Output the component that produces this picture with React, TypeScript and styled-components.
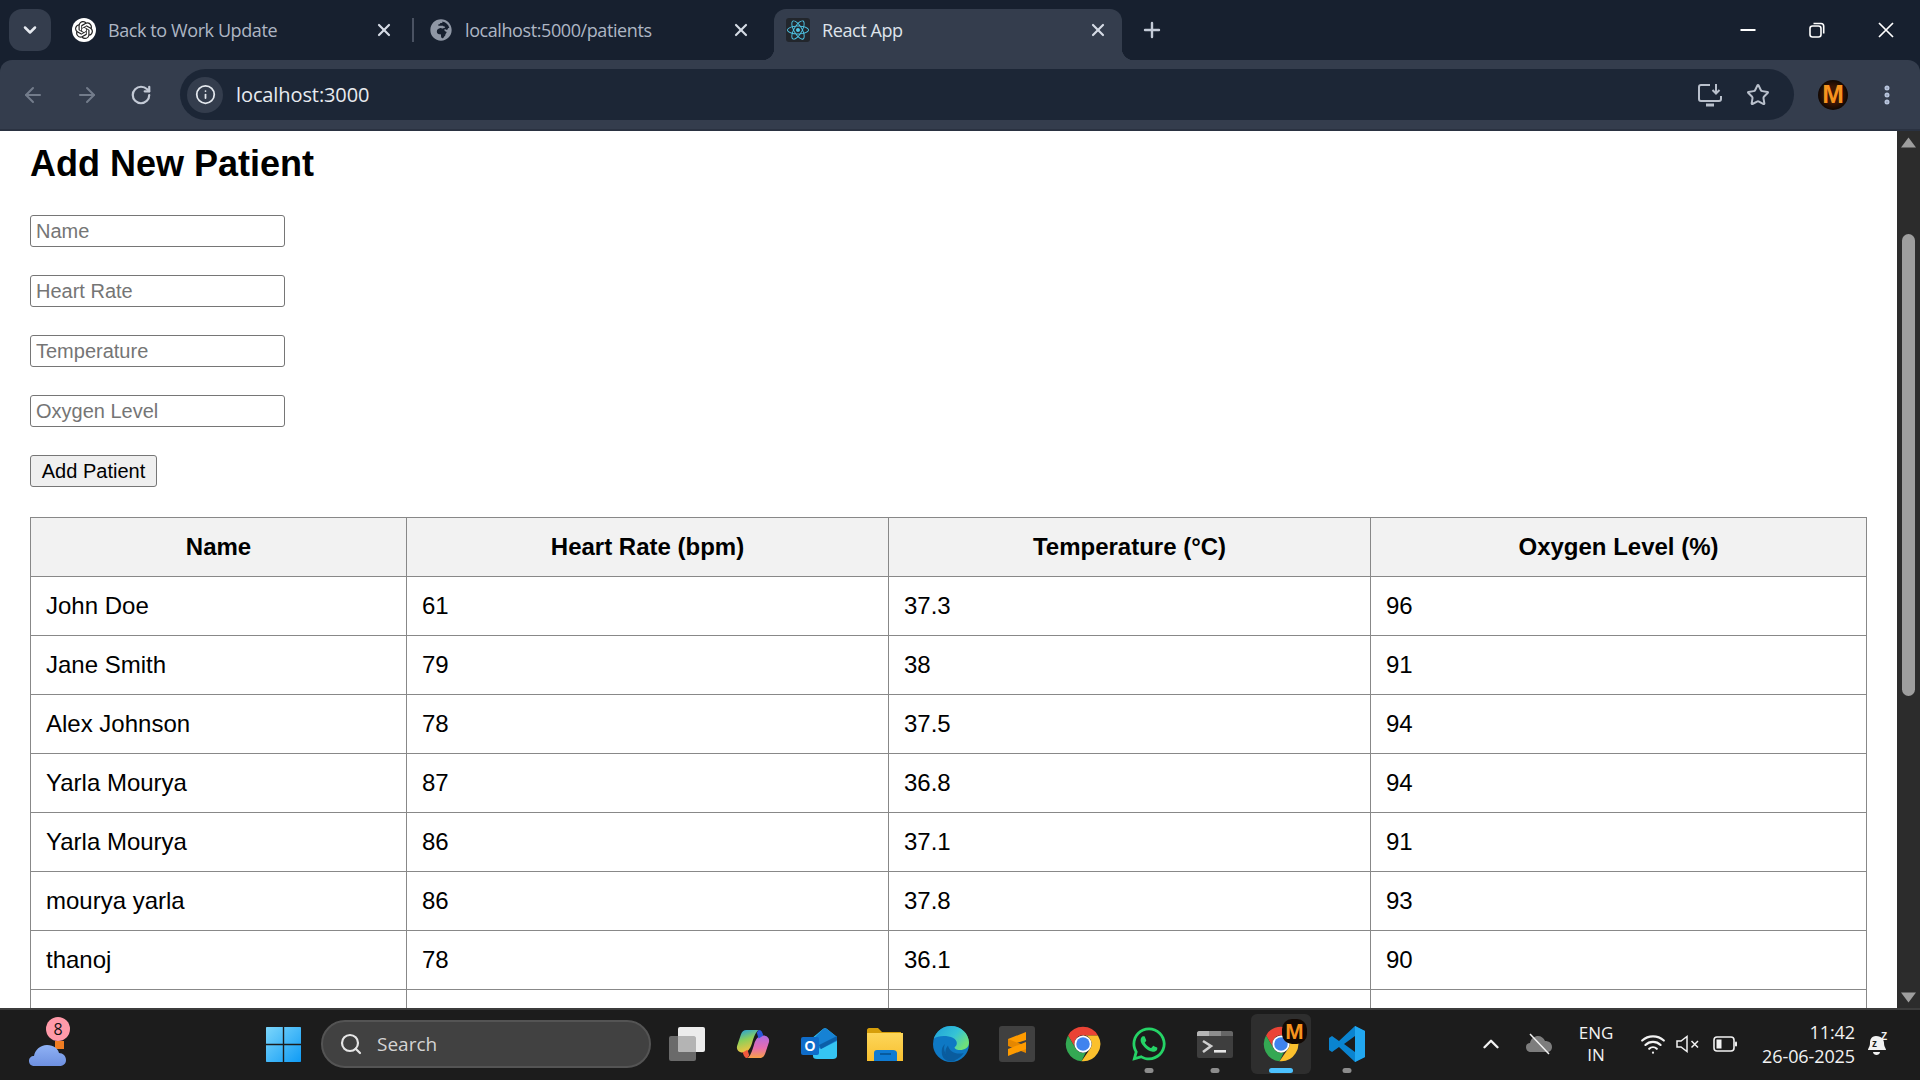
import React from "react";
import styled, { createGlobalStyle } from "styled-components";
import {
  ArrowLeft,
  ArrowRight,
  ChevronDown,
  ChevronUp,
  EllipsisVertical,
  Info,
  Plus,
  RotateCw,
  Search,
  Star,
  Wifi,
  X,
} from "lucide-react";
import { SiOpenai } from "react-icons/si";
import { FaGlobeAfrica, FaReact, FaWhatsapp } from "react-icons/fa";

const GlobalStyle = createGlobalStyle`
  html, body {
    margin: 0;
    height: 100%;
    overflow: hidden;
    background: #fff;
  }
  * {
    box-sizing: border-box;
  }
`;

const Screen = styled.div`
  width: 1920px;
  height: 1080px;
  display: flex;
  flex-direction: column;
  overflow: hidden;
  background: #17202f;
`;

/* browser chrome */

const TabStrip = styled.div`
  height: 60px;
  flex: none;
  display: flex;
  align-items: flex-end;
  padding-left: 9px;
  background: #17202f;
`;

const TabListButton = styled.div`
  width: 42px;
  height: 42px;
  margin: 0 9px 9px 0;
  display: flex;
  align-items: center;
  justify-content: center;
  border-radius: 13px;
  background: #343d4d;
  color: #e6eaf0;
`;

const Tab = styled.div<{ $active?: boolean }>`
  position: relative;
  width: 348px;
  height: 51px;
  display: flex;
  align-items: center;
  gap: 12px;
  padding: 0 14px 9px 12px;
  border-radius: 12px 12px 0 0;
  background: ${(p) => (p.$active ? "#343d4d" : "transparent")};
  color: ${(p) => (p.$active ? "#dfe4ec" : "#aeb6c4")};

  ${(p) =>
    p.$active &&
    `
    &::before, &::after {
      content: "";
      position: absolute;
      bottom: 0;
      width: 12px;
      height: 12px;
    }
    &::before {
      left: -12px;
      background: radial-gradient(circle at 0 0, transparent 12px, #343d4d 12.5px);
    }
    &::after {
      right: -12px;
      background: radial-gradient(circle at 100% 0, transparent 12px, #343d4d 12.5px);
    }
  `}
`;

const TabTitle = styled.span`
  flex: 1;
  font-family: "Open Sans", "Noto Sans", sans-serif;
  font-size: 18px;
  letter-spacing: -0.41px;
  white-space: nowrap;
`;

const TabClose = styled(X)`
  width: 20px;
  height: 20px;
  stroke-width: 2.6;
  color: #d5dbe5;
  flex: none;
`;

const OpenAiBadge = styled.span`
  width: 24px;
  height: 24px;
  flex: none;
  display: flex;
  align-items: center;
  justify-content: center;
  border-radius: 50%;
  background: #fff;
  color: #222;
`;

const ReactBadge = styled.span`
  width: 24px;
  height: 24px;
  flex: none;
  display: flex;
  align-items: center;
  justify-content: center;
  border-radius: 3px;
  background: #22262c;
  color: #4fc6e6;
`;

const GlobeBadge = styled.span`
  width: 24px;
  height: 24px;
  flex: none;
  display: flex;
  align-items: center;
  justify-content: center;
  color: #8f97a5;
`;

const TabDivider = styled.div<{ $hidden?: boolean }>`
  width: 9px;
  height: 24px;
  margin-bottom: 18px;
  flex: none;
  display: flex;
  justify-content: center;

  &::before {
    content: "";
    width: 2px;
    background: ${(p) => (p.$hidden ? "transparent" : "#4a5262")};
  }
`;

const NewTab = styled.div`
  width: 42px;
  height: 42px;
  margin: 0 0 9px 9px;
  display: flex;
  align-items: center;
  justify-content: center;
  color: #c4cbd8;
`;

const WindowControls = styled.div`
  margin-left: auto;
  height: 60px;
  display: flex;
`;

const WindowButton = styled.div`
  width: 69px;
  display: flex;
  align-items: center;
  justify-content: center;
  color: #fff;
`;

const Toolbar = styled.div`
  height: 71px;
  flex: none;
  display: flex;
  align-items: center;
  padding: 0 6px;
  border-bottom: 2px solid #2a3241;
  border-radius: 12px 12px 0 0;
  background: #343d4d;
`;

const NavButton = styled.div<{ $dim?: boolean }>`
  width: 54px;
  height: 48px;
  flex: none;
  display: flex;
  align-items: center;
  justify-content: center;
  color: ${(p) => (p.$dim ? "#737c8b" : "#c3cad6")};
`;

const Omnibox = styled.div`
  flex: 1;
  height: 51px;
  margin: 0 12px;
  display: flex;
  align-items: center;
  padding: 0 12px 0 7px;
  border-radius: 26px;
  background: #1c2636;
`;

const SiteInfo = styled.div`
  width: 36px;
  height: 36px;
  flex: none;
  display: flex;
  align-items: center;
  justify-content: center;
  border-radius: 50%;
  background: #343d4d;
  color: #e4e8ee;
`;

const Address = styled.span`
  flex: 1;
  margin-left: 13px;
  font-family: "Open Sans", "Noto Sans", sans-serif;
  font-size: 20px;
  letter-spacing: -0.1px;
  color: #e8ebf0;
`;

const OmniAction = styled.div`
  width: 48px;
  height: 48px;
  flex: none;
  display: flex;
  align-items: center;
  justify-content: center;
  color: #b9c0cc;
`;

const Avatar = styled.span`
  width: 30px;
  height: 30px;
  display: flex;
  align-items: center;
  justify-content: center;
  border-radius: 50%;
  background: radial-gradient(circle, #3c1604 40%, #0a0502 75%);
  font-family: "Liberation Sans", sans-serif;
  font-size: 26px;
  font-weight: 700;
  color: #f7931e;
`;

/* page */

const Viewport = styled.div`
  flex: 1;
  min-height: 0;
  display: flex;
  background: #fff;
`;

const Page = styled.main`
  flex: 1;
  min-width: 0;
  overflow: hidden;
  padding: 12px 30px 0;
  color: #000;
  font-family: "Liberation Sans", Arial, sans-serif;
`;

const Heading = styled.h1`
  margin: 0 0 31px;
  font-size: 36px;
  line-height: 41px;
  font-weight: 700;
`;

const PatientForm = styled.form`
  display: flex;
  flex-direction: column;
  align-items: flex-start;
  gap: 28px;
  margin-bottom: 30px;
`;

const TextField = styled.input`
  width: 255px;
  height: 32px;
  padding: 1px 5px;
  border: 1px solid #767676;
  border-radius: 3px;
  background: #fff;
  font-family: inherit;
  font-size: 20px;

  &::placeholder {
    color: #757575;
    opacity: 1;
  }
`;

const SubmitButton = styled.button`
  width: 127px;
  height: 32px;
  padding: 0;
  border: 1px solid #767676;
  border-radius: 3px;
  background: #efefef;
  color: #000;
  font-family: inherit;
  font-size: 20px;
`;

const PatientTable = styled.table`
  width: 1836px;
  table-layout: fixed;
  border-collapse: collapse;
  font-size: 24px;
`;

const TableColumn = styled.col<{ $w: number }>`
  width: ${(p) => p.$w}px;
`;

const HeadCell = styled.th`
  height: 59px;
  padding: 0 15px;
  border: 1px solid #888;
  background: #f2f2f2;
  text-align: center;
  font-weight: 700;
`;

const BodyCell = styled.td`
  height: 59px;
  padding: 0 15px;
  border: 1px solid #888;
  text-align: left;
`;

const Scrollbar = styled.div`
  width: 23px;
  flex: none;
  display: flex;
  flex-direction: column;
  align-items: center;
  padding: 6px 0 5px;
  background: #2c2c2c;
`;

const ScrollArrow = styled.svg`
  width: 15px;
  height: 11px;
  flex: none;
  fill: #9e9e9e;
`;

const ScrollThumb = styled.div`
  width: 13px;
  height: 462px;
  margin: 86px 0 auto;
  border-radius: 7px;
  background: #9e9e9e;
`;

/* taskbar */

const Taskbar = styled.footer`
  height: 72px;
  flex: none;
  display: flex;
  align-items: center;
  padding-left: 29px;
  border-top: 2px solid #3c3c3c;
  background: #1c1c1c;
  font-family: "Open Sans", "Noto Sans", sans-serif;
  color: #f2f2f2;
`;

const WeatherWidget = styled.div`
  position: relative;
  width: 38px;
  height: 26px;
  margin: 18px 199px 0 0;
  flex: none;
`;

const WeatherBadge = styled.span`
  position: absolute;
  top: -24px;
  left: 17px;
  width: 24px;
  height: 24px;
  display: flex;
  align-items: center;
  justify-content: center;
  border-radius: 50%;
  background: #ff9aa9;
  color: #111;
  font-size: 16px;
`;

const StartLogo = styled.svg`
  width: 35px;
  height: 35px;
  flex: none;
  margin: 0 20px 1px 0;
`;

const SearchBox = styled.div`
  width: 330px;
  height: 48px;
  flex: none;
  display: flex;
  align-items: center;
  gap: 14px;
  padding-left: 16px;
  margin: 0 3px 2px 0;
  border: 2px solid #545454;
  border-radius: 24px;
  background: #414141;
  color: #d4d4d4;
  font-size: 19px;
`;

const Dock = styled.div`
  display: flex;
`;

const DockItem = styled.div<{ $active?: boolean }>`
  position: relative;
  width: 66px;
  height: 70px;
  padding-bottom: 2px;
  display: flex;
  align-items: center;
  justify-content: center;

  ${(p) =>
    p.$active &&
    `
    &::before {
      content: "";
      position: absolute;
      top: 4px;
      left: 3px;
      width: 60px;
      height: 60px;
      border-radius: 6px;
      background: #2e2e2e;
    }
  `}

  & > svg {
    position: relative;
  }
`;

const RunDot = styled.span<{ $active?: boolean }>`
  position: absolute;
  bottom: 7px;
  left: 50%;
  width: ${(p) => (p.$active ? "24px" : "9px")};
  height: 5px;
  border-radius: 3px;
  transform: translateX(-50%);
  background: ${(p) => (p.$active ? "#4cc2ff" : "#8c8c8c")};
`;

const ProfileOverlay = styled.span`
  position: absolute;
  top: 9px;
  right: 7px;
  width: 25px;
  height: 25px;
  display: flex;
  align-items: center;
  justify-content: center;
  border-radius: 40%;
  background: #120803;
  color: #f7931e;
  font-family: "Liberation Sans", sans-serif;
  font-size: 22px;
  font-weight: 700;
`;

const Tray = styled.div`
  flex: 1;
  display: flex;
  align-items: center;
  height: 70px;
  padding-bottom: 2px;
`;

const TrayIcon = styled.div<{ $w: number; $ml?: number }>`
  width: ${(p) => p.$w}px;
  margin-left: ${(p) => p.$ml ?? 0}px;
  flex: none;
  display: flex;
  align-items: center;
  justify-content: center;
`;

const Language = styled.div`
  width: 60px;
  margin-left: 3px;
  flex: none;
  text-align: center;
  font-size: 17px;
  line-height: 22px;
`;

const Clock = styled.div`
  width: 105px;
  flex: none;
  text-align: right;
  font-size: 18px;
  letter-spacing: -0.1px;
  line-height: 24px;
  white-space: nowrap;
`;

function ChromeLogo() {
  return (
    <svg width="36" height="36" viewBox="0 0 48 48">
      <path d="M24 1A23 23 0 0 1 43.9 12.5L24 12.5A11.5 11.5 0 0 0 14 29.75L4.1 12.5A23 23 0 0 1 24 1Z" fill="#ea4335" />
      <path d="M4.1 12.5L14 29.75A11.5 11.5 0 0 0 28 34.8L22 47A23 23 0 0 1 4.1 12.5Z" fill="#34a853" />
      <path d="M43.9 12.5A23 23 0 0 1 22 47L34 29.75A11.5 11.5 0 0 0 24 12.5Z" fill="#fbc02d" />
      <circle cx="24" cy="24" r="11.5" fill="#fff" />
      <circle cx="24" cy="24" r="9" fill="#3f83ee" />
    </svg>
  );
}

function EdgeLogo() {
  return (
    <svg width="36" height="36" viewBox="0 0 48 48">
      <defs>
        <linearGradient id="edgeTop" x1="0" y1="0" x2="1" y2="0.6">
          <stop offset="0" stopColor="#1f9fd8" />
          <stop offset="0.6" stopColor="#35c3d6" />
          <stop offset="1" stopColor="#6fe07a" />
        </linearGradient>
      </defs>
      <circle cx="24" cy="24" r="24" fill="#0e78c4" />
      <path d="M1 17C5 6 14 0 24 0C37 0 48 10 48 22C48 29 42 32 36 32C31 32 28 30 29 28C33 26 33 19 27 16C18 12 6 13 1 17Z" fill="url(#edgeTop)" />
      <path d="M16 24C12 32 18 44 30 46C24 49 14 47 12 38C11 32 12 27 16 24Z" fill="#0a5c9e" />
      <path d="M20 26C21 33 30 39 41 36C37 42 30 47 24 46C17 44 13 34 20 26Z" fill="#0a5c9e" />
    </svg>
  );
}

function CopilotLogo() {
  return (
    <svg width="34" height="30" viewBox="0 0 36 32">
      <defs>
        <linearGradient id="copA" x1="0" y1="0" x2="0.3" y2="1">
          <stop offset="0" stopColor="#1b9de8" />
          <stop offset="0.5" stopColor="#8ccf5a" />
          <stop offset="1" stopColor="#f2c341" />
        </linearGradient>
        <linearGradient id="copB" x1="0.5" y1="0" x2="0.5" y2="1">
          <stop offset="0" stopColor="#b06be0" />
          <stop offset="0.55" stopColor="#e66db0" />
          <stop offset="1" stopColor="#f7a146" />
        </linearGradient>
      </defs>
      <path d="M11 1H24C21 3 19 8 17 15C15 22 12 25 7 25C3 25 0 22 1 18L5 6C6 3 8 1 11 1Z" fill="url(#copA)" />
      <path d="M25 31H12C15 29 17 24 19 17C21 10 24 7 29 7C33 7 36 10 35 14L31 26C30 29 28 31 25 31Z" fill="url(#copB)" />
      <path d="M24 1C27 1 28 3 29 7L24 10L22 4Z" fill="#2a57d8" />
      <path d="M12 31C9 31 8 28 7 25L12 22L14 28Z" fill="#f0583c" />
    </svg>
  );
}

function OutlookLogo() {
  return (
    <svg width="36" height="32" viewBox="0 0 36 32">
      <path d="M10 11L22 1C23 0 25 0 26 1L36 9V28C36 30 34 31 32 31H16C13 31 12 30 12 28Z" fill="#35c5f3" />
      <path d="M22 1C23 0 25 0 26 1L36 9V13L20 21L12 17V11Z" fill="#1682d4" />
      <path d="M18 17L36 8V12L20 21Z" fill="#0b5fa8" />
      <rect x="0" y="9" width="18" height="18" rx="2" fill="#0f6cc9" />
      <text x="9" y="23" textAnchor="middle" fontFamily="Liberation Sans, sans-serif" fontSize="14" fontWeight="700" fill="#fff">
        O
      </text>
    </svg>
  );
}

function ExplorerLogo() {
  return (
    <svg width="36" height="33" viewBox="0 0 36 33">
      <defs>
        <linearGradient id="folderFill" x1="0" y1="0" x2="0" y2="1">
          <stop offset="0" stopColor="#fdd65a" />
          <stop offset="1" stopColor="#f8c02f" />
        </linearGradient>
      </defs>
      <path d="M0 2C0 1 1 0 2 0H11L15 4H34V12H0Z" fill="#d69e0a" />
      <path d="M0 5H36V33H0Z" fill="url(#folderFill)" />
      <path d="M7 33V25C7 23 8 22 10 22H26C28 22 30 23 30 25V33Z" fill="#0f7bd3" />
      <rect x="13" y="25" width="11" height="2" fill="#075a9e" />
    </svg>
  );
}

function SublimeLogo() {
  return (
    <svg width="36" height="36" viewBox="0 0 36 36">
      <rect width="36" height="36" rx="3" fill="#404040" />
      <path d="M27 6V14L9 20V13Z" fill="#ff9b00" />
      <path d="M9 13L27 20V27L9 20Z" fill="#e58700" />
      <path d="M27 16V23L9 30V23Z" fill="#ff9b00" />
    </svg>
  );
}

function TerminalLogo() {
  return (
    <svg width="36" height="27" viewBox="0 0 36 27">
      <rect width="36" height="27" rx="2" fill="#3e3e3e" />
      <path d="M2 0H12V5H0V2C0 1 1 0 2 0Z" fill="#b5b5b5" />
      <rect x="12" y="0" width="12" height="5" fill="#8d8d8d" />
      <path d="M24 0H34C35 0 36 1 36 2V5H24Z" fill="#666" />
      <path d="M6 10L14 15L6 21" fill="none" stroke="#cfcfcf" strokeWidth="2.6" />
      <rect x="17" y="19" width="12" height="2.6" fill="#e6e6e6" />
    </svg>
  );
}

function VsCodeLogo() {
  return (
    <svg width="36" height="36" viewBox="0 0 36 36">
      <path d="M26 0L36 5V31L26 36L10 21L3 26L0 24V12L3 10L10 15ZM26 10L15 18L26 26Z" fill="#0a84d0" />
      <path d="M26 0L36 5V31L26 36Z" fill="#21a7f0" />
    </svg>
  );
}

function TaskViewLogo() {
  return (
    <svg width="36" height="34" viewBox="0 0 36 34">
      <rect x="0" y="9" width="27" height="25" rx="2" fill="#6a6a6a" />
      <rect x="9" y="0" width="27" height="25" rx="2" fill="#ececec" />
      <path d="M9 9H25C26 9 27 10 27 11V25H11C10 25 9 24 9 23Z" fill="#b4b4b4" />
    </svg>
  );
}

const dock: { id: string; logo: React.ReactNode; dot?: boolean }[] = [
  { id: "taskview", logo: <TaskViewLogo /> },
  { id: "copilot", logo: <CopilotLogo /> },
  { id: "outlook", logo: <OutlookLogo /> },
  { id: "explorer", logo: <ExplorerLogo /> },
  { id: "edge", logo: <EdgeLogo /> },
  { id: "sublime", logo: <SublimeLogo /> },
  { id: "chrome", logo: <ChromeLogo /> },
  { id: "whatsapp", logo: <FaWhatsapp size={38} color="#25d366" />, dot: true },
  { id: "terminal", logo: <TerminalLogo />, dot: true },
];

const fields = ["Name", "Heart Rate", "Temperature", "Oxygen Level"];

const patients = [
  ["John Doe", "61", "37.3", "96"],
  ["Jane Smith", "79", "38", "91"],
  ["Alex Johnson", "78", "37.5", "94"],
  ["Yarla Mourya", "87", "36.8", "94"],
  ["Yarla Mourya", "86", "37.1", "91"],
  ["mourya yarla", "86", "37.8", "93"],
  ["thanoj", "78", "36.1", "90"],
  ["", "", "", ""],
];

export default function App() {
  return (
    <Screen>
      <GlobalStyle />
      <TabStrip>
        <TabListButton>
          <ChevronDown size={20} strokeWidth={3} />
        </TabListButton>
        <Tab>
          <OpenAiBadge>
            <SiOpenai size={18} />
          </OpenAiBadge>
          <TabTitle>Back to Work Update</TabTitle>
          <TabClose />
        </Tab>
        <TabDivider />
        <Tab>
          <GlobeBadge>
            <FaGlobeAfrica size={22} />
          </GlobeBadge>
          <TabTitle>localhost:5000/patients</TabTitle>
          <TabClose />
        </Tab>
        <TabDivider $hidden />
        <Tab $active>
          <ReactBadge>
            <FaReact size={22} />
          </ReactBadge>
          <TabTitle>React App</TabTitle>
          <TabClose />
        </Tab>
        <NewTab>
          <Plus size={24} strokeWidth={2.4} />
        </NewTab>
        <WindowControls>
          <WindowButton>
            <svg width="16" height="16" viewBox="0 0 16 16">
              <rect x="0.5" y="7" width="15" height="2" fill="currentColor" />
            </svg>
          </WindowButton>
          <WindowButton>
            <svg width="16" height="16" viewBox="0 0 16 16" fill="none" stroke="currentColor" strokeWidth="1.6">
              <rect x="1" y="4" width="11" height="11" rx="2.5" />
              <path d="M4.5 1.5H12C13.5 1.5 14.7 2.7 14.7 4.2V11.5" />
            </svg>
          </WindowButton>
          <WindowButton>
            <svg width="16" height="16" viewBox="0 0 16 16" stroke="currentColor" strokeWidth="1.7">
              <path d="M1 1L15 15M15 1L1 15" />
            </svg>
          </WindowButton>
        </WindowControls>
      </TabStrip>

      <Toolbar>
        <NavButton $dim>
          <ArrowLeft size={24} />
        </NavButton>
        <NavButton $dim>
          <ArrowRight size={24} />
        </NavButton>
        <NavButton>
          <RotateCw size={22} strokeWidth={2.4} />
        </NavButton>
        <Omnibox>
          <SiteInfo>
            <Info size={21} />
          </SiteInfo>
          <Address>localhost:3000</Address>
          <OmniAction>
            <svg width="24" height="24" viewBox="0 0 24 24" fill="none" stroke="currentColor" strokeWidth="2">
              <path d="M12 2H3C2 2 1 3 1 4V16C1 17 2 18 3 18H21C22 18 23 17 23 16V13" />
              <path d="M8 22H16" strokeWidth="3" />
              <path d="M18 1V10M14.5 7L18 10.5L21.5 7" />
            </svg>
          </OmniAction>
          <OmniAction>
            <Star size={24} strokeWidth={2} />
          </OmniAction>
        </Omnibox>
        <NavButton>
          <Avatar>M</Avatar>
        </NavButton>
        <NavButton>
          <EllipsisVertical size={24} strokeWidth={3} color="#b9c6de" />
        </NavButton>
      </Toolbar>

      <Viewport>
        <Page>
          <Heading>Add New Patient</Heading>
          <PatientForm>
            {fields.map((f) => (
              <TextField key={f} placeholder={f} />
            ))}
            <SubmitButton type="button">Add Patient</SubmitButton>
          </PatientForm>
          <PatientTable>
            <colgroup>
              <TableColumn $w={376} />
              <TableColumn $w={482} />
              <TableColumn $w={482} />
              <TableColumn $w={496} />
            </colgroup>
            <thead>
              <tr>
                <HeadCell>Name</HeadCell>
                <HeadCell>Heart Rate (bpm)</HeadCell>
                <HeadCell>Temperature (°C)</HeadCell>
                <HeadCell>Oxygen Level (%)</HeadCell>
              </tr>
            </thead>
            <tbody>
              {patients.map((row, i) => (
                <tr key={i}>
                  {row.map((value, j) => (
                    <BodyCell key={j}>{value}</BodyCell>
                  ))}
                </tr>
              ))}
            </tbody>
          </PatientTable>
        </Page>
        <Scrollbar>
          <ScrollArrow viewBox="0 0 15 11">
            <path d="M7.5 0.5L15 10.5H0Z" />
          </ScrollArrow>
          <ScrollThumb />
          <ScrollArrow viewBox="0 0 15 11">
            <path d="M7.5 10.5L15 0.5H0Z" />
          </ScrollArrow>
        </Scrollbar>
      </Viewport>

      <Taskbar>
        <WeatherWidget>
          <svg width="38" height="26" viewBox="0 0 38 26">
            <defs>
              <linearGradient id="cloudFill" x1="0" y1="0" x2="0" y2="1">
                <stop offset="0" stopColor="#8fb2f5" />
                <stop offset="1" stopColor="#6e90e0" />
              </linearGradient>
            </defs>
            <rect x="26" y="0" width="9" height="8" fill="#ef7d22" />
            <path d="M6 25C2 25 0 23 0 20C0 17 2 15 5 15C6 9 11 4 18 4C25 4 29 8 30 12C34 12 37 15 37 19C37 23 34 25 30 25Z" fill="url(#cloudFill)" />
          </svg>
          <WeatherBadge>8</WeatherBadge>
        </WeatherWidget>
        <StartLogo viewBox="0 0 35 35">
          <defs>
            <linearGradient id="winFill" x1="0" y1="0" x2="1" y2="1">
              <stop offset="0" stopColor="#7cd6fb" />
              <stop offset="1" stopColor="#0f9bf5" />
            </linearGradient>
          </defs>
          <path d="M1 0H16.8V16.8H0V1C0 0.4 0.4 0 1 0ZM18.2 0H34C34.6 0 35 0.4 35 1V16.8H18.2ZM0 18.2H16.8V35H1C0.4 35 0 34.6 0 34ZM18.2 18.2H35V34C35 34.6 34.6 35 34 35H18.2Z" fill="url(#winFill)" />
        </StartLogo>
        <SearchBox>
          <Search size={24} strokeWidth={2.2} color="#e6e6e6" />
          Search
        </SearchBox>
        <Dock>
          {dock.map((d) => (
            <DockItem key={d.id}>
              {d.logo}
              {d.dot && <RunDot />}
            </DockItem>
          ))}
          <DockItem $active>
            <ChromeLogo />
            <ProfileOverlay>M</ProfileOverlay>
            <RunDot $active />
          </DockItem>
          <DockItem>
            <VsCodeLogo />
            <RunDot />
          </DockItem>
        </Dock>
        <Tray>
          <TrayIcon $w={48} $ml={87}>
            <ChevronUp size={26} strokeWidth={2.2} />
          </TrayIcon>
          <TrayIcon $w={48}>
            <svg width="26" height="22" viewBox="0 0 26 22">
              <path d="M5 19C2 19 0 17 0 14C0 11 2 10 4 10C5 5 9 3 12 3C15 3 18 5 19 8C23 8 26 10 26 14C26 17 24 19 21 19Z" fill="#7d7d7d" />
              <path d="M4 1L23 21" stroke="#f2f2f2" strokeWidth="1.5" />
            </svg>
          </TrayIcon>
          <Language>
            ENG
            <br />
            IN
          </Language>
          <TrayIcon $w={46} $ml={4}>
            <Wifi size={26} strokeWidth={2} />
          </TrayIcon>
          <TrayIcon $w={24}>
            <svg width="24" height="18" viewBox="0 0 24 18" fill="none" stroke="#f2f2f2" strokeWidth="1.5">
              <path d="M1 6H5L11 1.5V16.5L5 12H1Z" />
              <path d="M15.5 6L22 12.5M22 6L15.5 12.5" />
            </svg>
          </TrayIcon>
          <TrayIcon $w={50}>
            <svg width="24" height="16" viewBox="0 0 24 16">
              <rect x="1" y="1" width="20" height="14" rx="3" fill="none" stroke="#f2f2f2" strokeWidth="1.6" />
              <rect x="3.5" y="3.5" width="5" height="9" fill="#f2f2f2" />
              <rect x="22" y="5.5" width="2" height="5" rx="1" fill="#f2f2f2" />
            </svg>
          </TrayIcon>
          <Clock>
            11:42
            <br />
            26-06-2025
          </Clock>
          <TrayIcon $w={46}>
            <svg width="22" height="24" viewBox="0 0 22 24">
              <path d="M9 4C4 4 3 8 3 11C3 15 1 16 1 18H19C19 16 17 15 17 11C17 8 15 4 9 4Z" fill="#f2f2f2" />
              <path d="M6 20H13C13 22 11 23 9.5 23C8 23 6 22 6 20Z" fill="#f2f2f2" />
              <text x="5" y="15" fontFamily="Liberation Sans, sans-serif" fontSize="10" fontWeight="700" fill="#1c1c1c">
                z
              </text>
              <text x="14" y="8" fontFamily="Liberation Sans, sans-serif" fontSize="10" fontWeight="700" fill="#f2f2f2">
                Z
              </text>
            </svg>
          </TrayIcon>
        </Tray>
      </Taskbar>
    </Screen>
  );
}
